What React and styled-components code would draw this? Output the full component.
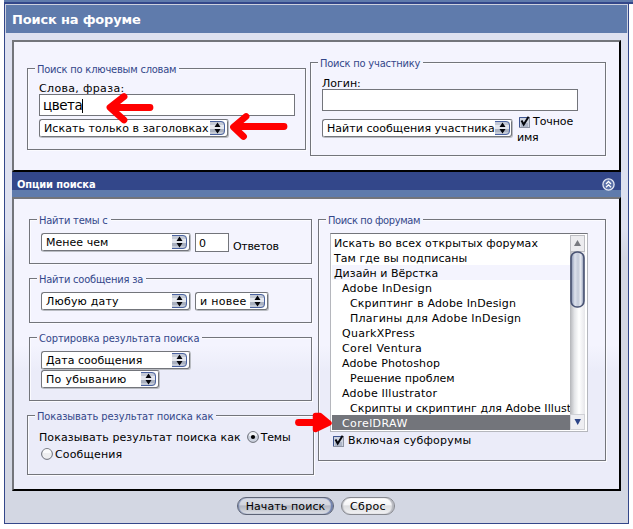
import React from "react";
import styled, { createGlobalStyle, css } from "styled-components";

const navy = "#33478a";
const blue = "#5f7bac";
const grey = "#73757b";

const Global = createGlobalStyle`
  * { box-sizing: border-box; }
  body { margin: 0; background: #fff; color: #000; font: 11px/13px "DejaVu Sans", Verdana, sans-serif; }
`;

const Page = styled.div`position: relative; width: 633px; height: 529px; overflow: hidden;`;
const TopStrip = styled.div`height: 4px; margin-left: 4px; background: ${blue}; border-bottom: 2px solid ${navy};`;
const Frame = styled.main`
  margin-left: 4px; width: 625px; height: 520px;
  border: 1px solid ${navy}; border-top: 0;
`;
const Title = styled.h1`
  margin: 0; height: 29px; padding: 8px 0 0 6px;
  background: ${blue}; color: #fff; border: 1px solid #cdd1de; border-bottom: 0;
  font: bold 13px/14px "DejaVu Sans", Verdana, sans-serif; letter-spacing: -0.18px; white-space: nowrap;
`;
const Body = styled.div`
  height: 490px; padding: 7px 7px 0;
  background: linear-gradient(#dee1f0 0, #dee1f0 195px, #d3d7e3 225px);
`;
const Panel = styled.section`
  display: flex; gap: 4px; align-items: flex-start;
  height: ${p => p.$h}px; padding: 20px 13px 0;
  border: 2px solid #000; border-top-color: ${grey}; border-left-color: ${grey};
  background: ${p => p.$fade ? "linear-gradient(#f4f4fe 0, #f4f4fe 146px, #ebecf9 172px)" : "#f4f4fe"};
`;
const SectionHeader = styled.header`
  display: flex; justify-content: space-between; align-items: flex-start;
  height: 25px; padding: 6px 6px 0 5px; color: #fff;
  background: linear-gradient(${navy} 18px, ${blue} 18px);
  font: bold 11px/13px "DejaVu Sans Condensed", Tahoma, sans-serif;
`;
const LeftColumn = styled.div`display: flex; flex-direction: column; gap: 14px; width: 287px;`;
const Group = styled.div`
  flex: none; width: ${p => p.$w}px; height: ${p => p.$h}px; padding-left: 11px;
  margin: ${p => p.$m || 0}; border: 1px solid ${grey};
  box-shadow: 1px 1px 0 #fbfbff, inset 1px 1px 0 #fbfbff;
`;
const Legend = styled.div`
  width: fit-content; height: 13px; margin: -6px 0 ${p => p.$gap ?? 6}px -4px; padding: 0 3px 0 2px;
  background: ${p => p.$dark ? "#ebecf9" : "#f4f4fe"}; color: ${navy}; white-space: nowrap;
  font: 11px/13px "DejaVu Sans Condensed", Tahoma, sans-serif; letter-spacing: ${p => p.$ls ?? -0.2}px;
`;
const Text = styled.span`white-space: nowrap; letter-spacing: ${p => p.$ls || 0}px;`;
const FieldLabel = styled.label`display: block; height: 12px; line-height: 14px;`;
const field = css`
  display: flex; align-items: center; background: #fff; border: 1px solid ${grey};
`;
const Input = styled.div`
  ${field} width: 256px; height: 22px; padding: 1px 0 0 3px;
  font-size: 13.5px; letter-spacing: -0.45px; margin-bottom: ${p => p.$gap}px;
`;
const Caret = styled.i`width: 1px; height: 14px; background: #000;`;
const NumberInput = styled.div`${field} width: 34px; height: 19px; padding: 2px 0 0 3px; margin-left: 4px;`;
const Suffix = styled(Text)`margin: 7px 0 0 4px;`;
const Row = styled.div`display: flex; align-items: flex-start;`;

const SelectBox = styled.div`
  display: flex; justify-content: space-between; align-items: center;
  flex: none; width: ${p => p.$w}px; height: 19px; padding: 0 2px 0 4px; margin-left: ${p => p.$ml || 0}px;
  background: #fff; border: 1px solid ${grey}; border-radius: 3px;
  border-right-color: #b9bcc2; border-bottom-color: #b9bcc2;
  box-shadow: inset -1px -1px 0 ${grey};
`;
const Stepper = styled.svg`flex: none; width: 16px; height: 14px; margin-bottom: 1px; display: block;`;

const CheckText = styled.div`margin: -5px 0 0 4px; line-height: 16px;`;
const CheckLine = styled.div`display: flex; align-items: center; gap: ${p => p.$gap || 3}px; padding-left: ${p => p.$pl || 0}px;`;
const Mark = styled.svg`flex: none; display: block;`;
const RadioRow = styled.div`display: flex; align-items: flex-start; height: 17px; padding-left: ${p => p.$pl || 0}px;`;
const RadioMark = styled.svg`flex: none; width: 12px; height: 12px; margin: 0 2px 0 ${p => p.$ml || 0}px;`;

const ListBox = styled.div`
  display: flex; width: 258px; height: 199px; margin-bottom: 2px; padding: 1px;
  background: #fff; border: 1px solid #b5b7bd; border-top-color: ${grey};
`;
const Options = styled.div`flex: 1; min-width: 0; overflow: hidden;`;
const Option = styled.div`
  height: 15px; line-height: 15px; padding: 1px 0 0 ${p => [2, 10, 18][p.$level]}px; white-space: nowrap;
  letter-spacing: ${p => p.$ls}px;
  ${p => p.$tint && "background: #f4f4fe;"}
  ${p => p.$selected && `background: ${grey}; color: #fff;`}
`;
const Scrollbar = styled.svg`flex: none; width: 16px; height: 195px; display: block;`;

const Actions = styled.div`display: flex; gap: 7px; padding: 6px 0 0 225px;`;
const Button = styled.button`
  width: ${p => p.$w}px; height: 18px; padding: 0; border: 1px solid ${p => p.$primary ? "#5d6476" : "#85878e"};
  border-radius: 9px; color: #000; font: 11px/13px "DejaVu Sans", Verdana, sans-serif; letter-spacing: ${p => p.$ls}px;
  white-space: nowrap;
  background: ${p => p.$primary
    ? "linear-gradient(#d9dce6 0, #d3d6df 45%, #b2b6c2 48%, #c3c7d0 70%, #e0e2e8)"
    : "linear-gradient(#fff 0, #f5f5f7 45%, #dcdde0 48%, #f2f2f4)"};
  box-shadow: inset 1px 0 1px ${p => p.$primary ? "#7385b0" : "#b7b9c0"}, inset -2px 0 1px ${p => p.$primary ? "#6f80ae" : "#b7b9c0"};
`;
const Pointers = styled.svg`position: absolute; left: 0; top: 0; width: 633px; height: 529px; pointer-events: none;`;

const Select = ({ w, ml, ls, children }) => (
  <SelectBox $w={w} $ml={ml}>
    <Text $ls={ls}>{children}</Text>
    <Stepper viewBox="0 0 16 14">
      <path d="M0 0H11Q15 0 15 4V10Q15 14 11 14H0Z" fill="#c4cad6" />
      <path d="M0 4H14V8H0Z" fill="#e4e7ee" />
      <path d="M0 8H14V11H0Z" fill="#aab1c0" />
      <path d="M0 .5H11Q14.5 .5 14.5 4V10Q14.5 13.5 11 13.5H0" fill="none" stroke="#4a62a0" />
      <path d="M4.5 6 7.5 1.5 10.5 6ZM4.5 8 7.5 12.5 10.5 8Z" fill="#05060c" />
    </Stepper>
  </SelectBox>
);

const Check = () => (
  <Mark width="11" height="12" viewBox="0 0 11 12">
    <rect x=".5" y="1.5" width="10" height="10" fill="#cfd4e0" stroke="#8d93a3" />
    <path d="M.5 11V1.5H9" fill="none" stroke="#3f5691" />
    <rect x="2" y="7" width="7" height="4" fill="#aeb6c8" />
    <path d="M2.5 4.5 4.7 8.5 9.6 .8" fill="none" stroke="#05060c" strokeWidth="2" />
  </Mark>
);

const Radio = ({ on, ml }) => (
  <RadioMark viewBox="0 0 12 12" $ml={ml}>
    <circle cx="6" cy="6" r="5.4" fill={on ? "#cdd3e0" : "#eeeef0"} stroke="#6c6f78" />
    <path d="M2 5A4 4 0 0 1 10 5Z" fill="#fff" opacity=".7" />
    {on && <circle cx="6" cy="6" r="2.1" fill="#000" />}
  </RadioMark>
);

const forums = [
  ["Искать во всех открытых форумах", 0, 0.07],
  ["Там где вы подписаны", 0, 0.06],
  ["Дизайн и Вёрстка", 0, 0.02, "tint"],
  ["Adobe InDesign", 1, 0.27],
  ["Скриптинг в Adobe InDesign", 2, 0.15],
  ["Плагины для Adobe InDesign", 2, 0.22],
  ["QuarkXPress", 1, 0.3],
  ["Corel Ventura", 1, 0.4],
  ["Adobe Photoshop", 1, 0.14],
  ["Решение проблем", 2, 0],
  ["Adobe Illustrator", 1, 0.22],
  ["Скрипты и скриптинг для Adobe Illust", 2, 0.08],
  ["CorelDRAW", 1, 0.42, "selected"],
];

export default function App() {
  return (
    <Page>
      <Global />
      <TopStrip />
      <Frame>
        <Title>Поиск на форуме</Title>
        <Body>
          <Panel $h={132}>
            <Group $w={279} $h={82} $m="6px 0 0">
              <Legend>Поиск по ключевым словам</Legend>
              <FieldLabel><Text $ls={0.34}>Слова, фраза:</Text></FieldLabel>
              <Input $gap={3}>цвета<Caret /></Input>
              <Select w={190} ls={0.07}>Искать только в заголовках</Select>
            </Group>
            <Group $w={296} $h={94}>
              <Legend $gap={7}>Поиск по участнику</Legend>
              <FieldLabel><Text>Логин:</Text></FieldLabel>
              <Input $gap={8} />
              <Row>
                <Select w={191} ls={0.03}>Найти сообщения участника</Select>
                <CheckText>
                  <CheckLine $pl={2}><Check /><Text $ls={-0.07}>Точное</Text></CheckLine>
                  <Text $ls={-0.22}>имя</Text>
                </CheckText>
              </Row>
            </Group>
          </Panel>
          <SectionHeader>
            <Text $ls={-0.1}>Опции поиска</Text>
            <Mark width="13" height="13" viewBox="0 0 13 13">
              <circle cx="6.5" cy="6.5" r="5.6" fill="#5a6fa8" stroke="#e3e7f3" strokeWidth="1.3" />
              <path d="M4 6 6.5 3.5 9 6M4 9.3 6.5 6.8 9 9.3" fill="none" stroke="#fff" strokeWidth="1.3" />
            </Mark>
          </SectionHeader>
          <Panel $h={294} $fade>
            <LeftColumn>
              <Group $w={283} $h={45} $m="0 0 0 2px">
                <Legend>Найти темы с</Legend>
                <Row>
                  <Select w={150} ls={0.03}>Менее чем</Select>
                  <NumberInput>0</NumberInput>
                  <Suffix $ls={-0.33}>Ответов</Suffix>
                </Row>
              </Group>
              <Group $w={283} $h={45} $m="0 0 0 2px">
                <Legend>Найти сообщения за</Legend>
                <Row>
                  <Select w={150} ls={0.19}>Любую дату</Select>
                  <Select w={74} ml={4} ls={0.28}>и новее</Select>
                </Row>
              </Group>
              <Group $w={283} $h={64} $m="0 0 0 2px">
                <Legend $ls={-0.12}>Сортировка результата поиска</Legend>
                <Select w={150}>Дата сообщения</Select>
                <Select w={119} ls={0.3}>По убыванию</Select>
              </Group>
              <Group $w={287} $h={60}>
                <Legend $dark $gap={8} $ls={-0.09}>Показывать результат поиска как</Legend>
                <RadioRow><Text $ls={0.08}>Показывать результат поиска как</Text><Radio on ml={6} /><Text $ls={-0.2}>Темы</Text></RadioRow>
                <RadioRow $pl={2}><Radio /><Text $ls={0.14}>Сообщения</Text></RadioRow>
              </Group>
            </LeftColumn>
            <Group $w={288} $h={242}>
              <Legend $ls={-0.36}>Поиск по форумам</Legend>
              <ListBox>
                <Options>
                  {forums.map(([name, level, ls, state]) => (
                    <Option key={name} $level={level} $ls={ls} $tint={state === "tint"} $selected={state === "selected"}>{name}</Option>
                  ))}
                </Options>
                <Scrollbar viewBox="1 0 16 195">
                  <defs>
                    <linearGradient id="track"><stop offset="0" stopColor="#b4b5b9" /><stop offset=".3" stopColor="#e4e5e8" /><stop offset=".6" stopColor="#fff" /><stop offset="1" stopColor="#e6e6ea" /></linearGradient>
                    <linearGradient id="thumb"><stop offset="0" stopColor="#7f8cab" /><stop offset=".3" stopColor="#dde2ed" /><stop offset=".55" stopColor="#c3cad9" /><stop offset=".75" stopColor="#e8ebf2" /><stop offset="1" stopColor="#7f8cab" /></linearGradient>
                  </defs>
                  <rect x="1" width="15" height="195" fill="url(#track)" />
                  <rect x="1.5" y=".5" width="14" height="16" fill="#ececef" stroke="#bcbdc2" />
                  <path d="M5 11H12L8.5 5Z" fill="#77797f" />
                  <rect x="2" y="17" width="13" height="55" rx="6" fill="url(#thumb)" stroke="#4a5474" strokeWidth="1.6" />
                  <rect x="1.5" y="179.5" width="14" height="15" fill="#eeeef2" stroke="#d0d1d6" />
                  <path d="M5.5 184H12L8.7 190Z" fill="#2c4488" />
                </Scrollbar>
              </ListBox>
              <CheckLine $pl={3} $gap={4}><Check /><Text $ls={0.21}>Включая субфорумы</Text></CheckLine>
            </Group>
          </Panel>
          <Actions>
            <Button $w={97} $primary $ls={0.11}>Начать поиск</Button>
            <Button $w={54} $ls={0.33}>Сброс</Button>
          </Actions>
        </Body>
      </Frame>
      <Pointers viewBox="0 0 633 529" fill="none" stroke="#f00" strokeWidth="6.8" strokeLinecap="round" strokeLinejoin="round">
        <path d="M150 107.5H111M124 96.5 110 107.5 124 120" />
        <path d="M284 126.5H236M246 116.5 233.5 127 243.5 136.5" />
        <path d="M298.5 422.5H322" />
        <path d="M315.5 415.5V429.5L329 423 320 415.5Z" fill="#f00" strokeWidth="5.5" />
      </Pointers>
    </Page>
  );
}
